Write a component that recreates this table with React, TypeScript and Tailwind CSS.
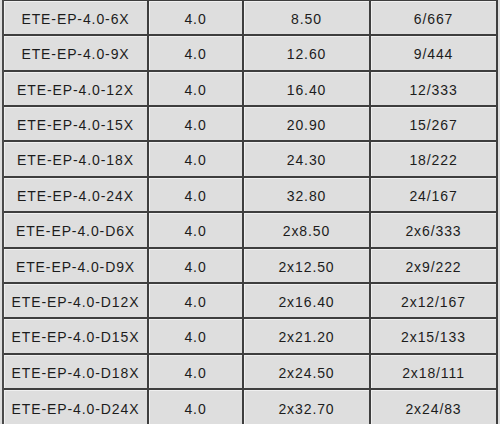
import React from "react";

const rows: [string, string, string, string][] = [
  ["ETE-EP-4.0-6X", "4.0", "8.50", "6/667"],
  ["ETE-EP-4.0-9X", "4.0", "12.60", "9/444"],
  ["ETE-EP-4.0-12X", "4.0", "16.40", "12/333"],
  ["ETE-EP-4.0-15X", "4.0", "20.90", "15/267"],
  ["ETE-EP-4.0-18X", "4.0", "24.30", "18/222"],
  ["ETE-EP-4.0-24X", "4.0", "32.80", "24/167"],
  ["ETE-EP-4.0-D6X", "4.0", "2x8.50", "2x6/333"],
  ["ETE-EP-4.0-D9X", "4.0", "2x12.50", "2x9/222"],
  ["ETE-EP-4.0-D12X", "4.0", "2x16.40", "2x12/167"],
  ["ETE-EP-4.0-D15X", "4.0", "2x21.20", "2x15/133"],
  ["ETE-EP-4.0-D18X", "4.0", "2x24.50", "2x18/111"],
  ["ETE-EP-4.0-D24X", "4.0", "2x32.70", "2x24/83"],
];

const heights = [
  "h-[35px]",
  "h-[36px]",
  "h-[35px]",
  "h-[35px]",
  "h-[36px]",
  "h-[35px]",
  "h-[36px]",
  "h-[35px]",
  "h-[35px]",
  "h-[36px]",
  "h-[35px]",
  "h-[37px]",
];

const widths = ["w-[145px]", "w-[95px]", "w-[127px]", "w-[127px]"];

export default function App() {
  return (
    <div className="w-[500px] h-[424px] overflow-hidden bg-[#dedede]">
      <div
        className="ml-[2px] -mt-[1px] border-l-2 border-[#4a4a4a] w-[496px] text-[#1c1c1c] text-[14px] tracking-[0.9px]"
        style={{ fontFamily: '"Liberation Sans", Arial, sans-serif' }}
      >
        {rows.map((r, i) => (
          <div
            key={i}
            className={`flex border-t-2 border-[#3e3e3e] box-border ${heights[i]}`}
          >
            {r.map((c, j) => (
              <div
                key={j}
                className={`${widths[j]} shrink-0 border-r-2 border-[#3e3e3e] flex items-center justify-center pt-[3px] bg-[#dedede] shadow-[inset_1px_1px_0_#f0f0f0]`}
              >
                {c}
              </div>
            ))}
          </div>
        ))}
      </div>
    </div>
  );
}
